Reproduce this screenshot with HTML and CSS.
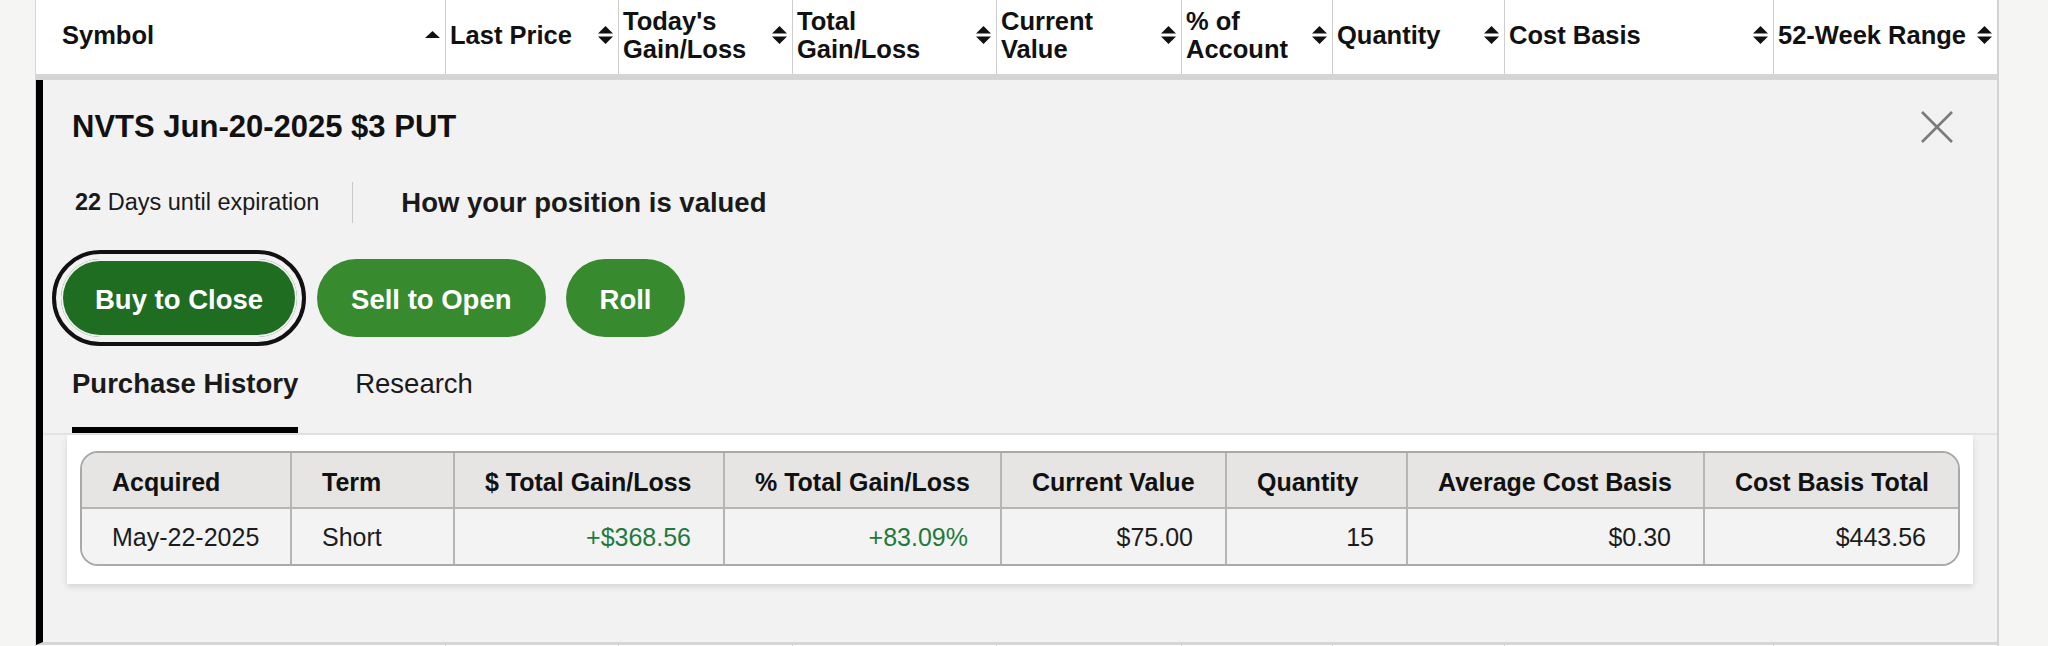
FILE: index.html
```html
<!DOCTYPE html>
<html lang="en">
<head>
<meta charset="utf-8">
<title>Positions</title>
<link rel="stylesheet" href="styles.css">
</head>
<body>
<div class="wrap">
  <div class="thead">
    <div class="th first"><span>Symbol</span><svg class="sort" width="15" height="18" viewBox="0 0 15 18"><path d="M0 12 L7.5 5 L15 12 Z"/></svg></div>
    <div class="th"><span>Last Price</span><svg class="sort" width="15" height="18" viewBox="0 0 15 18"><path d="M0 7.5 L7.5 0 L15 7.5 Z M0 10.5 L15 10.5 L7.5 18 Z"/></svg></div>
    <div class="th"><span>Today's<br>Gain/Loss</span><svg class="sort" width="15" height="18" viewBox="0 0 15 18"><path d="M0 7.5 L7.5 0 L15 7.5 Z M0 10.5 L15 10.5 L7.5 18 Z"/></svg></div>
    <div class="th"><span>Total<br>Gain/Loss</span><svg class="sort" width="15" height="18" viewBox="0 0 15 18"><path d="M0 7.5 L7.5 0 L15 7.5 Z M0 10.5 L15 10.5 L7.5 18 Z"/></svg></div>
    <div class="th"><span>Current<br>Value</span><svg class="sort" width="15" height="18" viewBox="0 0 15 18"><path d="M0 7.5 L7.5 0 L15 7.5 Z M0 10.5 L15 10.5 L7.5 18 Z"/></svg></div>
    <div class="th"><span>% of<br>Account</span><svg class="sort" width="15" height="18" viewBox="0 0 15 18"><path d="M0 7.5 L7.5 0 L15 7.5 Z M0 10.5 L15 10.5 L7.5 18 Z"/></svg></div>
    <div class="th"><span>Quantity</span><svg class="sort" width="15" height="18" viewBox="0 0 15 18"><path d="M0 7.5 L7.5 0 L15 7.5 Z M0 10.5 L15 10.5 L7.5 18 Z"/></svg></div>
    <div class="th"><span>Cost Basis</span><svg class="sort" width="15" height="18" viewBox="0 0 15 18"><path d="M0 7.5 L7.5 0 L15 7.5 Z M0 10.5 L15 10.5 L7.5 18 Z"/></svg></div>
    <div class="th last"><span>52-Week Range</span><svg class="sort" width="15" height="18" viewBox="0 0 15 18"><path d="M0 7.5 L7.5 0 L15 7.5 Z M0 10.5 L15 10.5 L7.5 18 Z"/></svg></div>
  </div>

  <div class="detail">
    <div class="detail-head">
      <div class="title-row">
        <h2 class="title">NVTS Jun-20-2025 $3 PUT</h2>
        <button class="close" aria-label="Close"><svg width="32" height="32" viewBox="0 0 32 32"><path d="M1 1 L31 31 M31 1 L1 31" stroke="#7b7b7b" stroke-width="2.6" fill="none"/></svg></button>
      </div>
      <div class="info-row">
        <span class="expiry"><b>22</b> Days until expiration</span>
        <span class="vdivider"></span>
        <span class="valued">How your position is valued</span>
      </div>
      <div class="actions">
        <button class="btn btn-focus">Buy to Close</button>
        <button class="btn">Sell to Open</button>
        <button class="btn">Roll</button>
      </div>
      <div class="tabs">
        <span class="tab active">Purchase History</span>
        <span class="tab">Research</span>
      </div>
    </div>
    <div class="detail-body">
      <div class="card">
        <div class="ph-wrap">
          <table class="ph">
            <colgroup>
              <col style="width:209px"><col style="width:163px"><col style="width:270px"><col style="width:277px">
              <col style="width:225px"><col style="width:181px"><col style="width:297px"><col style="width:254px">
            </colgroup>
            <thead>
              <tr>
                <th>Acquired</th><th>Term</th><th>$ Total Gain/Loss</th><th>% Total Gain/Loss</th>
                <th>Current Value</th><th>Quantity</th><th>Average Cost Basis</th><th>Cost Basis Total</th>
              </tr>
            </thead>
            <tbody>
              <tr>
                <td class="l">May-22-2025</td><td class="l">Short</td><td class="gain">+$368.56</td><td class="gain">+83.09%</td>
                <td>$75.00</td><td>15</td><td>$0.30</td><td>$443.56</td>
              </tr>
            </tbody>
          </table>
        </div>
      </div>
    </div>
  </div>

  <div class="next-row">
    <div class="cell"></div><div class="cell"></div><div class="cell"></div><div class="cell"></div><div class="cell"></div>
    <div class="cell"></div><div class="cell"></div><div class="cell"></div><div class="cell last"></div>
  </div>
</div>
</body>
</html>
```

FILE: styles.css
```css
html, body {
  margin: 0;
  padding: 0;
  overflow: hidden;
  height: 646px;
  background: #f5f5f3;
  font-family: "Liberation Sans", Arial, sans-serif;
  color: #111;
}

.wrap {
  margin-left: 35px;
  width: 1961px;
  border-left: 1px solid #d8d8d8;
  border-right: 2px solid #d3d3d3;
  background: #fff;
}

/* main table header */
.thead {
  display: grid;
  grid-template-columns: 410px 173px 174px 204px 185px 151px 172px 269px 223px;
  height: 74px;
  border-bottom: 6px solid #d5d5d5;
  background: #fff;
}
.th {
  display: flex;
  align-items: center;
  justify-content: space-between;
  padding: 0 5px 4px 4px;
  border-right: 1px solid #cdcdcd;
  font-size: 25.5px;
  font-weight: bold;
  line-height: 28px;
  color: #111;
}
.th.first { padding-left: 26px; }
.th.last { border-right: none; }
.sort { flex: none; fill: #111; }

/* detail panel */
.detail {
  background: #f2f2f2;
  border-left: 7px solid #000;
  border-bottom: 3px solid #d6d6d6;
}
.detail-head {
  padding: 29px 44px 0 29px;
}
.title-row {
  display: flex;
  align-items: center;
  justify-content: space-between;
  height: 36px;
}
.title {
  margin: 0;
  font-size: 31px;
  line-height: 36px;
  font-weight: bold;
  color: #111;
}
.close {
  background: none;
  border: none;
  padding: 0;
  width: 32px;
  height: 32px;
  display: flex;
}

.info-row {
  display: flex;
  align-items: center;
  height: 41px;
  margin-top: 37px;
  padding-left: 3px;
}
.expiry {
  font-size: 23.5px;
  color: #1a1a1a;
}
.expiry b { font-weight: bold; }
.vdivider {
  width: 1px;
  height: 41px;
  background: #c9c9c9;
  margin-left: 33px;
}
.valued {
  margin-left: 48px;
  font-size: 27.5px;
  font-weight: bold;
  color: #1a1a1a;
}

.actions {
  display: flex;
  gap: 20px;
  margin-top: 36px;
  margin-left: -11px;
}
.btn {
  height: 78px;
  padding: 4px 34px 0 34px;
  border: none;
  border-radius: 39px;
  background: #378a2d;
  color: #fff;
  font-family: "Liberation Sans", Arial, sans-serif;
  font-size: 27.5px;
  font-weight: bold;
}
.btn-focus {
  background: #1f6d21;
  box-shadow: inset 0 0 0 2px #f2f2f2;
  outline: 4px solid #111;
  outline-offset: 5px;
}

.tabs {
  display: flex;
  gap: 57px;
  margin-top: 31px;
}
.tab {
  font-size: 27.5px;
  line-height: 32px;
  padding-bottom: 27px;
  border-bottom: 6px solid transparent;
  color: #1a1a1a;
}
.tab.active {
  font-weight: bold;
  border-bottom-color: #000;
}

.detail-body {
  border-top: 2px solid #e3e3e3;
  padding: 0 24px 58px 24px;
}
.card {
  background: #fff;
  padding: 16px 13px 18px 13px;
  box-shadow: 0 3px 6px rgba(0, 0, 0, 0.12);
}
.ph-wrap {
  border: 2px solid #a9a9a9;
  border-radius: 18px;
  overflow: hidden;
}
.ph {
  width: 100%;
  table-layout: fixed;
  border-collapse: collapse;
  font-size: 25px;
}
.ph th {
  height: 49px;
  padding: 5px 30px 0 30px;
  background: #e6e5e3;
  text-align: left;
  font-weight: bold;
  color: #111;
  border-bottom: 2px solid #b5b5b5;
  white-space: nowrap;
}
.ph td {
  height: 54px;
  padding: 1px 32px 0 32px;
  background: #f3f3f3;
  text-align: right;
  color: #1c1c1c;
  white-space: nowrap;
}
.ph td.l { text-align: left; padding-left: 30px; }
.ph th + th, .ph td + td { border-left: 2px solid #b5b5b5; }
.ph td.gain { color: #1f7a3c; }

/* following row */
.next-row {
  display: grid;
  grid-template-columns: 410px 173px 174px 204px 185px 151px 172px 269px 223px;
  height: 40px;
  background: #fff;
}
.next-row .cell { border-right: 1px solid #cdcdcd; }
.next-row .cell.last { border-right: none; }
```
